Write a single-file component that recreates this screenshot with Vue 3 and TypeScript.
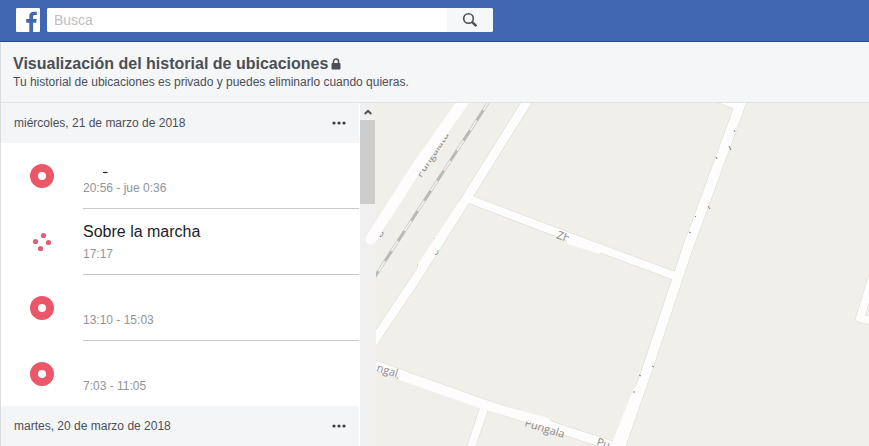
<script setup lang="ts">
import { ref } from 'vue'

interface Visit {
  kind: 'place' | 'moving'
  title: string
  time: string
  mark?: boolean
}

interface Day {
  date: string
  visits: Visit[]
}

const query = ref('')

const days: Day[] = [
  {
    date: 'miércoles, 21 de marzo de 2018',
    visits: [
      { kind: 'place', title: '', time: '20:56 - jue 0:36', mark: true },
      { kind: 'moving', title: 'Sobre la marcha', time: '17:17' },
      { kind: 'place', title: '', time: '13:10 - 15:03' },
      { kind: 'place', title: '', time: '7:03 - 11:05' },
    ],
  },
  { date: 'martes, 20 de marzo de 2018', visits: [] },
]

const roads = [
  { d: 'M528 100L468 196L415 280L376 338L366 353', w: 9 },
  { d: 'M469 199L540 226L675 276', w: 8 },
  { d: 'M720 99L741 107', w: 8 },
  { d: 'M742 100L687 250L647 370L619 450', w: 10 },
  { d: 'M366 362L484 404L600 442L625 450', w: 9 },
  { d: 'M485 406L470 450', w: 8 },
  { d: 'M876 266L860 318L880 323', w: 8 },
]
</script>

<template>
  <div class="page">
    <header class="topbar">
      <a class="logo" href="#" aria-label="Facebook">
        <svg viewBox="0 0 24 24" width="24" height="24">
          <path
            fill="#fff"
            d="M22.676 0H1.324C.593 0 0 .593 0 1.324v21.352C0 23.408.593 24 1.324 24h12v-9.294H10.2v-3.621h3.124V8.41c0-3.099 1.894-4.785 4.659-4.785 1.325 0 2.464.097 2.796.141v3.24h-1.921c-1.5 0-1.792.721-1.792 1.771v2.311h3.584l-.465 3.63h-3.119V24h5.61c.733 0 1.325-.592 1.325-1.324V1.324C24 .593 23.408 0 22.676 0"
          />
        </svg>
      </a>
      <form class="search" role="search" @submit.prevent>
        <input v-model="query" type="text" placeholder="Busca" aria-label="Busca" />
        <button type="submit" aria-label="Buscar">
          <svg viewBox="0 0 16 16" width="16" height="16" fill="none" stroke="#4b4f56">
            <circle cx="6.5" cy="6.5" r="4.8" stroke-width="1.6" />
            <path d="M10.2 10.2L14.4 14.2" stroke-width="2.4" />
          </svg>
        </button>
      </form>
    </header>

    <section class="intro">
      <h1>
        Visualización del historial de ubicaciones<svg viewBox="0 0 10 12" width="10" height="12">
          <path d="M2.5 6V3.5a2.5 2.5 0 0 1 5 0V6" fill="none" stroke="#4b4f56" stroke-width="1.5" />
          <rect x="0.5" y="5" width="9" height="6.5" rx="1" fill="#4b4f56" />
        </svg>
      </h1>
      <p>Tu historial de ubicaciones es privado y puedes eliminarlo cuando quieras.</p>
    </section>

    <main class="body">
      <div class="history">
        <section v-for="day in days" :key="day.date">
          <div class="day">
            <h2>{{ day.date }}</h2>
            <button type="button" aria-label="Opciones">
              <svg viewBox="0 0 14 4" width="14" height="4" fill="#3a3d42">
                <circle cx="2" cy="2" r="1.6" />
                <circle cx="7" cy="2" r="1.6" />
                <circle cx="12" cy="2" r="1.6" />
              </svg>
            </button>
          </div>
          <ul v-if="day.visits.length">
            <li v-for="visit in day.visits" :key="visit.time">
              <svg class="pin" viewBox="0 0 24 24" width="24" height="24">
                <circle
                  v-if="visit.kind === 'place'"
                  cx="12" cy="12" r="8" fill="none" stroke="#eb5768" stroke-width="8"
                />
                <g v-else fill="#dd5f78">
                  <circle cx="13.5" cy="5.5" r="2.6" />
                  <circle cx="5.5" cy="11.5" r="2.6" />
                  <circle cx="18.5" cy="12.5" r="2.6" />
                  <circle cx="10.5" cy="18.5" r="2.6" />
                </g>
              </svg>
              <div class="visit">
                <div class="title">
                  {{ visit.title }}
                  <svg v-if="visit.mark" class="mark" viewBox="0 0 28 20" width="28" height="20">
                    <path d="M20 16.500h4.500" stroke="#1d2129" stroke-width="1.200" />
                  </svg>
                </div>
                <div class="time">{{ visit.time }}</div>
              </div>
            </li>
          </ul>
        </section>
      </div>

      <div class="scrollbar">
        <button type="button" aria-label="Subir">
          <svg viewBox="0 0 8 6" width="8" height="6">
            <path d="M.8 5L4 1.800L7.200 5" fill="none" stroke="#505050" stroke-width="2" />
          </svg>
        </button>
        <div class="thumb"></div>
      </div>

      <svg class="map" role="img" aria-label="Mapa">
        <defs>
          <clipPath id="map-area"><rect x="376" y="103" width="3000" height="2000" /></clipPath>
          <clipPath id="spill-area"><rect x="360" y="103" width="3000" height="2000" /></clipPath>
        </defs>
        <g transform="translate(-376 -103)" stroke-linejoin="round">
          <g clip-path="url(#map-area)" fill="none">
            <path v-for="road in roads" :key="'e' + road.d" :d="road.d" stroke="#dcdad4" :stroke-width="road.w + 1" />
            <path v-for="road in roads" :key="road.d" :d="road.d" stroke="#fefdfd" :stroke-width="road.w" />
            <path d="M490 100L374 278" stroke="#c4c4c1" stroke-width="3" />
            <path d="M490 100L374 278" stroke="#f4f3f0" stroke-width="1.600" />
            <path d="M486.500 105.300L374 278" stroke="#b9b9b6" stroke-width="2.600" stroke-dasharray="12 12" stroke-dashoffset="-6" />
          </g>
          <g clip-path="url(#map-area)" class="street">
            <text transform="translate(421 178) rotate(-57)">Pungalatu</text>
            <text transform="translate(368 253) rotate(-57)">Pungala</text>
            <text transform="translate(423 271) rotate(-57)">Pungala</text>
            <text transform="translate(376 371) rotate(17)">ngal,</text>
            <text transform="translate(524 426) rotate(17)">Pungala</text>
            <text transform="translate(596 445) rotate(18)">Pu</text>
            <text transform="translate(556 238) rotate(20)">Zh</text>
          </g>
          <g fill="none" stroke="#fefcfd" stroke-linecap="round">
            <path clip-path="url(#spill-area)" d="M463 102L415 170L371 239" stroke-width="11" />
            <path d="M462 205L422 266" stroke-width="9" />
            <path d="M570 241L598 250" stroke-width="7" />
            <path d="M402 376L484 405L546 422" stroke-width="9" />
            <path d="M618 441L638 391" stroke-width="10" clip-path="url(#map-area)" />
          </g>
          <path
            d="M734 130l1 2M729 146l2 4M716 157l1 2M708 206l2 3M695 216l1 1M689 232l2 1M652 366l2 1M639 375l2 1M634 391v2"
            stroke="#85807f"
            fill="none"
          />
        </g>
      </svg>
    </main>
  </div>
</template>

<style>
body {
  margin: 0;
}
</style>

<style scoped>
.page {
  display: flex;
  flex-direction: column;
  height: 100vh;
  overflow: hidden;
  background: #fff;
  color: #4b4f56;
  font-family: "Liberation Sans", Arial, sans-serif;
  font-size: 12px;
}
h1,
h2,
p,
ul {
  margin: 0;
  padding: 0;
}
button {
  display: flex;
  align-items: center;
  justify-content: center;
  border: 0;
  padding: 0;
  background: none;
  cursor: pointer;
}
.topbar {
  flex: none;
  display: flex;
  align-items: center;
  gap: 7px;
  padding: 8px 16px 9px;
  background: #4267b2;
  border-bottom: 1px solid #29487d;
}
.logo,
.logo svg {
  display: block;
}
.search {
  display: flex;
  flex: 0 1 446px;
  height: 24px;
  border-radius: 2px;
  overflow: hidden;
  background: #fff;
}
.search input {
  flex: 1;
  min-width: 0;
  border: 0;
  padding: 0 7px;
  outline: 0;
  background: #fff;
  font: 14px "Liberation Sans", Arial, sans-serif;
}
.search input::placeholder {
  color: #bfc0c5;
}
.search button {
  width: 46px;
  background: #f6f7f9;
}
.intro {
  flex: none;
  padding: 12px;
  background: #f5f6f8;
  border-left: 1px solid #dcdde1;
  border-bottom: 1px solid #e1e2e5;
}
h1 {
  font-size: 16px;
  line-height: 20px;
}
h1 svg {
  margin-left: 3px;
  vertical-align: -1px;
}
p {
  line-height: 16px;
}
.body {
  flex: 1;
  min-height: 0;
  display: flex;
}
.history {
  flex: 0 0 358px;
  overflow: hidden;
  border-left: 1px solid #dcdde1;
  border-right: 1px solid #fff;
}
.day {
  display: flex;
  align-items: center;
  justify-content: space-between;
  height: 40px;
  padding: 0 13px;
  background: #f4f5f7;
}
h2 {
  font-size: 12px;
  font-weight: normal;
}
ul {
  list-style: none;
}
li {
  display: flex;
  align-items: center;
}
.pin {
  flex: none;
  margin: 0 29px;
}
.visit {
  flex: 1;
  padding: 13px 0 12px;
  border-bottom: 1px solid #c8c9cb;
}
li:last-child .visit {
  border-bottom: 0;
}
.title {
  height: 20px;
  margin-bottom: 4px;
  color: #1d2129;
  font-size: 16px;
  line-height: 20px;
}
.mark {
  display: block;
}
.time {
  color: #90949c;
  line-height: 16px;
}
.scrollbar {
  flex: 0 0 16px;
  background: #f0f0f0;
}
.scrollbar button {
  width: 15px;
  height: 17px;
}
.thumb {
  width: 15px;
  height: 84px;
  background: #cdcdcd;
}
.map {
  flex: 1;
  min-width: 0;
  height: 100%;
  overflow: visible;
  background: #f0efea;
}
.street {
  fill: #8d8b88;
  font-family: "Open Sans", "Noto Sans", sans-serif;
  font-size: 11px;
}
</style>
